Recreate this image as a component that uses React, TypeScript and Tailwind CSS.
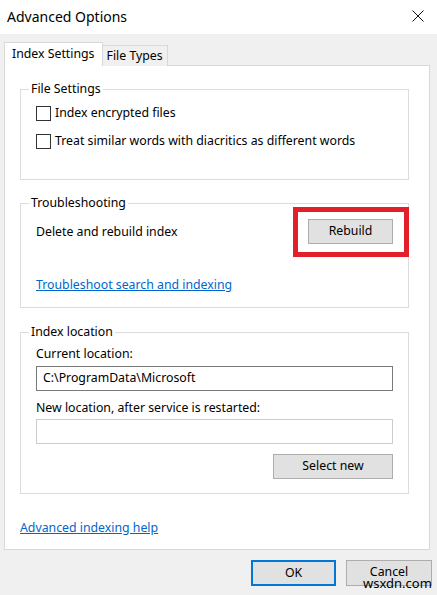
import React from "react";

function Checkbox({ label }: { label: string }) {
  return (
    <label className="flex items-center h-[20px] gap-[4px]">
      <span className="w-[15px] h-[15px] border border-[#333333] bg-white shrink-0" />
      <span>{label}</span>
    </label>
  );
}

function Group({ title, className, children }: { title: string; className?: string; children: React.ReactNode }) {
  return (
    <fieldset className={`border border-[#dcdcdc] px-[15px] ${className ?? ""}`}>
      <legend className="ml-[-7px] px-[2px] leading-[16px]">{title}</legend>
      {children}
    </fieldset>
  );
}

function WinButton({ children, className }: { children: React.ReactNode; className?: string }) {
  return (
    <button className={`h-[25px] bg-[#e1e1e1] border border-[#adadad] leading-none ${className ?? ""}`}>
      {children}
    </button>
  );
}

export default function App() {
  return (
    <div
      className="relative w-[437px] h-[595px] bg-[#f0f0f0] flex flex-col overflow-hidden text-[12.3px] text-black"
      style={{ fontFamily: '"Noto Sans", "Open Sans", sans-serif' }}
    >
      {/* title bar */}
      <div className="h-[34px] bg-white flex items-center justify-between pl-[7px] pr-[13px] shrink-0">
        <span className="text-[14px] mt-[-2px]">Advanced Options</span>
        <svg width="12" height="12" viewBox="0 0 12 12" className="mt-[-3px]">
          <path d="M0.5 0.5 L11.5 11.5 M11.5 0.5 L0.5 11.5" stroke="#111" strokeWidth="1" />
        </svg>
      </div>

      {/* tabs */}
      <div className="flex items-end pl-[4px] mt-[8px] h-[24px] relative z-10">
        <div className="h-[24px] px-[7px] bg-white border border-b-0 border-[#d9d9d9] flex items-center">
          Index Settings
        </div>
        <div className="h-[21px] px-[4px] bg-[#f0f0f0] border border-l-0 border-b-0 border-[#d9d9d9] flex items-center">
          File Types
        </div>
      </div>

      {/* tab page */}
      <div className="ml-[4px] w-[426px] h-[485px] mt-[-1px] bg-white border border-[#d9d9d9] pt-[15px] pl-[15px] pr-[20px] flex flex-col">
        <Group title="File Settings" className="pt-[6px] pb-[28px]">
          <div className="flex flex-col gap-[8px]">
            <Checkbox label="Index encrypted files" />
            <Checkbox label="Treat similar words with diacritics as different words" />
          </div>
        </Group>

        <Group title="Troubleshooting" className="mt-[15px] pt-[8px] pb-[14px]">
          <div className="flex items-center justify-between">
            <span className="mt-[2px]">Delete and rebuild index</span>
            <div className="relative">
              <WinButton className="w-[85px]">Rebuild</WinButton>
              <div className="absolute left-[-15px] right-[-16px] top-[-12px] bottom-[-13px] border-[5px] border-[#e3202a] pointer-events-none" />
            </div>
          </div>
          <div className="mt-[33px] leading-[16px]">
            <a className="text-[#0066cc] underline">Troubleshoot search and indexing</a>
          </div>
        </Group>

        <Group title="Index location" className="mt-[16px] pt-[6px] pb-[14px]">
          <div className="leading-[16px]">Current location:</div>
          <div className="mt-[4px] h-[25px] border border-[#7a7a7a] flex items-center px-[6px]">
            C:\ProgramData\Microsoft
          </div>
          <div className="mt-[9px] leading-[16px]">New location, after service is restarted:</div>
          <div className="mt-[3px] h-[25px] border border-[#cccccc]" />
          <div className="mt-[10px] flex justify-end">
            <WinButton className="w-[120px]">Select new</WinButton>
          </div>
        </Group>

        <div className="mt-[26px] leading-[16px]">
          <a className="text-[#0066cc] underline">Advanced indexing help</a>
        </div>
      </div>

      {/* footer buttons */}
      <div className="flex justify-end gap-[10px] pr-[5px] mt-[10px]">
        <button className="w-[85px] h-[26px] bg-[#e1e1e1] border-2 border-[#0078d7]">OK</button>
        <WinButton className="w-[86px] h-[26px] pb-[2px]">Cancel</WinButton>
      </div>

      <span className="absolute left-[363px] top-[575px] text-[13px] leading-[16px] text-black">wsxdn.com</span>
    </div>
  );
}
